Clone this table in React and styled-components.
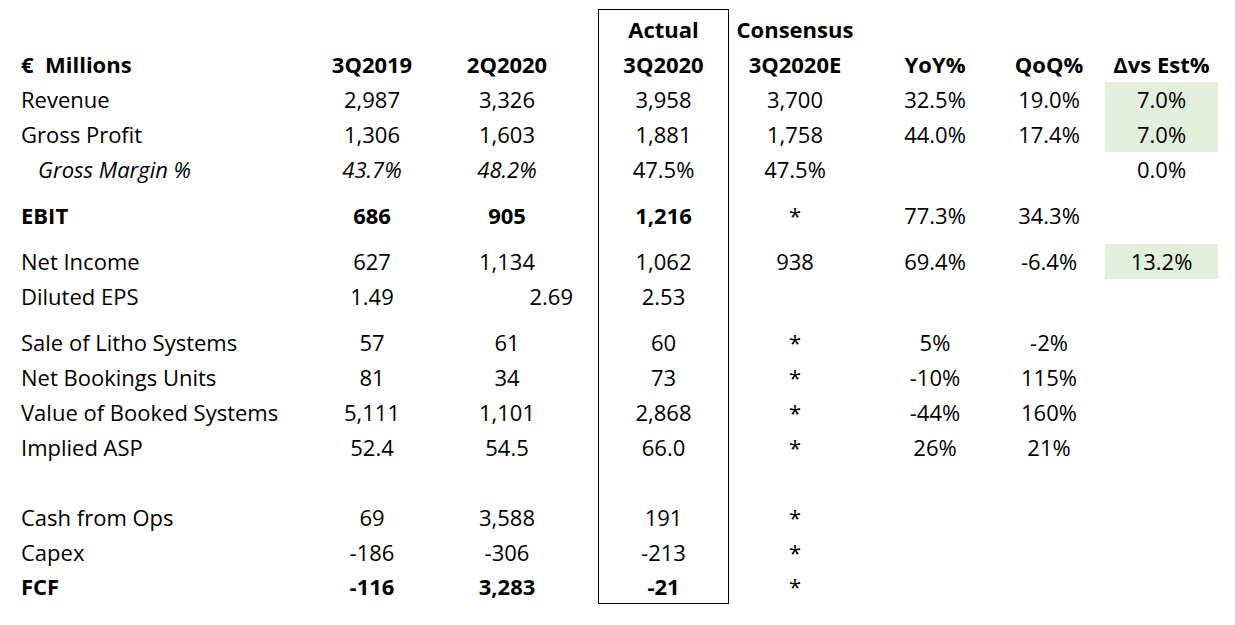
import React from 'react'
import styled, { createGlobalStyle } from 'styled-components'

const GlobalStyle = createGlobalStyle`
  html, body {
    margin: 0;
    padding: 0;
    background: #ffffff;
  }
  body {
    font-family: "Open Sans", Lato, "Liberation Sans", sans-serif;
    color: #000000;
  }
`

const COLUMNS = '328px 88px 182px 131px 132px 148px 80px 145px'

const rows = [
  { type: 'head', top: true, cells: ['', '', '', 'Actual', 'Consensus', '', '', ''] },
  { type: 'head', cells: ['€  Millions', '3Q2019', '2Q2020', '3Q2020', '3Q2020E', 'YoY%', 'QoQ%', 'Δvs Est%'] },
  { cells: ['Revenue', '2,987', '3,326', '3,958', '3,700', '32.5%', '19.0%', '7.0%'], highlight: true },
  { cells: ['Gross Profit', '1,306', '1,603', '1,881', '1,758', '44.0%', '17.4%', '7.0%'], highlight: true },
  { cells: ['Gross Margin %', '43.7%', '48.2%', '47.5%', '47.5%', '', '', '0.0%'], italicUpTo: 3, indent: true },
  { spacer: true },
  { cells: ['EBIT', '686', '905', '1,216', '*', '77.3%', '34.3%', ''], boldUpTo: 4 },
  { spacer: true },
  { cells: ['Net Income', '627', '1,134', '1,062', '938', '69.4%', '-6.4%', '13.2%'], highlight: true },
  { cells: ['Diluted EPS', '1.49', '2.69', '2.53', '', '', '', ''], rightCol: 2 },
  { spacer: true },
  { cells: ['Sale of Litho Systems', '57', '61', '60', '*', '5%', '-2%', ''] },
  { cells: ['Net Bookings Units', '81', '34', '73', '*', '-10%', '115%', ''] },
  { cells: ['Value of Booked Systems', '5,111', '1,101', '2,868', '*', '-44%', '160%', ''] },
  { cells: ['Implied ASP', '52.4', '54.5', '66.0', '*', '26%', '21%', ''] },
  { cells: ['', '', '', '', '', '', '', ''] },
  { cells: ['Cash from Ops', '69', '3,588', '191', '*', '', '', ''] },
  { cells: ['Capex', '-186', '-306', '-213', '*', '', '', ''] },
  { cells: ['FCF', '-116', '3,283', '-21', '*', '', '', ''], boldUpTo: 4, last: true },
]

export default function App() {
  return (
    <>
      <GlobalStyle />
      <Sheet>
        {rows.map((row, i) => {
          if (row.spacer) {
            return (
              <Row key={i} $height={11}>
                {Array.from({ length: 8 }).map((_, c) => (
                  <Cell key={c} $actual={c === 3} />
                ))}
              </Row>
            )
          }
          const head = row.type === 'head'
          return (
            <Row key={i} $height={row.top ? 38 : row.last ? 34 : 35}>
              {row.cells.map((text, c) => {
                const isLabel = c === 0
                const isDelta = c === 7
                return (
                  <Cell
                    key={c}
                    $actual={c === 3}
                    $top={row.top}
                    $last={row.last}
                    $align={isLabel ? 'left' : row.rightCol === c ? 'right' : 'center'}
                    $bold={head || (row.boldUpTo && c < row.boldUpTo)}
                    $italic={row.italicUpTo && c < row.italicUpTo}
                    $indent={isLabel && row.indent}
                  >
                    {isDelta && row.highlight ? <Highlight>{text}</Highlight> : text}
                  </Cell>
                )
              })}
            </Row>
          )
        })}
      </Sheet>
    </>
  )
}

const Sheet = styled.div`
  width: 1235px;
  padding-top: 9px;
  display: flex;
  flex-direction: column;
`

const Row = styled.div`
  display: grid;
  grid-template-columns: ${COLUMNS};
  height: ${p => p.$height}px;
`

const Cell = styled.div`
  box-sizing: border-box;
  display: flex;
  align-items: center;
  justify-content: ${p => (p.$align === 'left' ? 'flex-start' : p.$align === 'right' ? 'flex-end' : 'center')};
  padding-left: ${p => (p.$align === 'left' ? (p.$indent ? 38 : 21) : 0)}px;
  padding-right: ${p => (p.$align === 'right' ? 25 : 0)}px;
  padding-top: ${p => (p.$top ? 3 : 0)}px;
  padding-bottom: 2px;
  font-size: 22px;
  font-weight: ${p => (p.$bold ? 700 : 400)};
  font-style: ${p => (p.$italic ? 'italic' : 'normal')};
  white-space: pre;
  border-left: ${p => (p.$actual ? '1px solid #000' : 'none')};
  border-right: ${p => (p.$actual ? '1px solid #000' : 'none')};
  border-top: ${p => (p.$actual && p.$top ? '1px solid #000' : 'none')};
  border-bottom: ${p => (p.$actual && p.$last ? '1px solid #000' : 'none')};
`

const Highlight = styled.div`
  width: 113px;
  height: calc(100% + 2px);
  margin-bottom: -2px;
  background: #e2efda;
  display: flex;
  align-items: center;
  justify-content: center;
  padding-bottom: 2px;
  box-sizing: border-box;
`
